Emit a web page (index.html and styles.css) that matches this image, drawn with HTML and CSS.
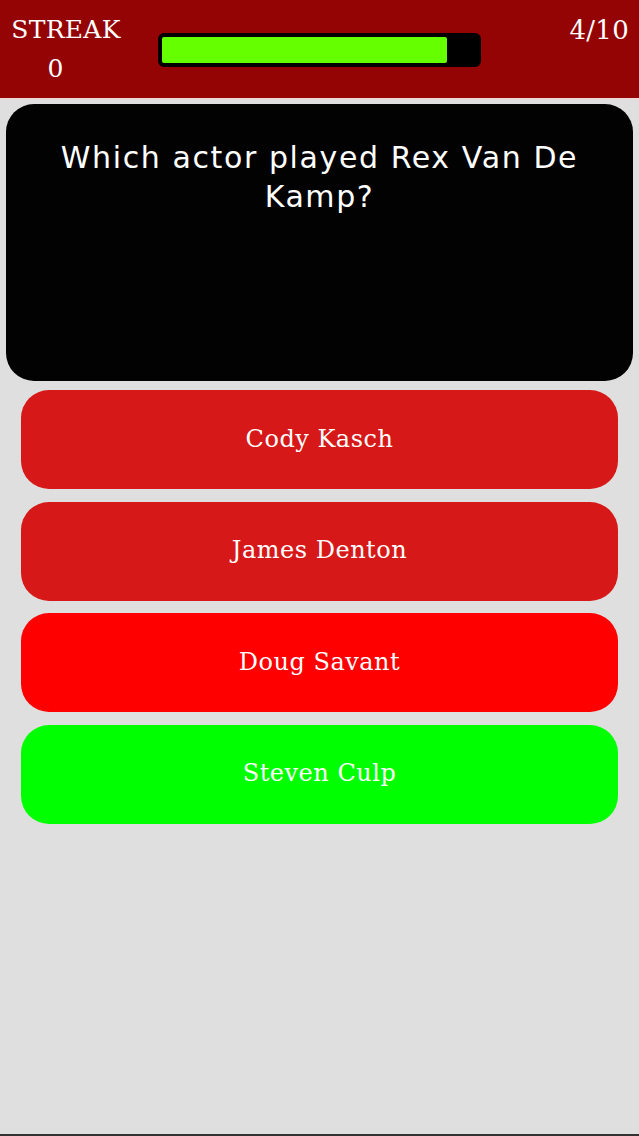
FILE: index.html
```html
<!DOCTYPE html>
<html lang="en">
<head>
  <meta charset="UTF-8">
  <title>Quiz</title>
  <link rel="stylesheet" href="styles.css">
</head>
<body>
  <div class="screen">
    <div class="topbar">
      <div class="streak">
        <div>STREAK</div>
        <div class="streak-num">0</div>
      </div>
      <div class="progress">
        <div class="progress-fill" style="width: 90.5%"></div>
      </div>
      <div class="count">4/10</div>
    </div>

    <div class="question">
      <p>Which actor played Rex Van De Kamp?</p>
    </div>

    <div class="answers">
      <div class="answer">Cody Kasch</div>
      <div class="answer">James Denton</div>
      <div class="answer wrong">Doug Savant</div>
      <div class="answer right">Steven Culp</div>
    </div>
  </div>
</body>
</html>
```

FILE: styles.css
```css
body {
  margin: 0;
  background: #e0dfe0;
  font-family: 'DejaVu Serif', serif;
}

.screen {
  height: 1134px;
  border-bottom: 2px solid #333;
  display: flex;
  flex-direction: column;
}

.topbar {
  height: 98px;
  border-bottom: 2px solid #e8d8d8;
  background: #940404;
  color: #fff;
  display: flex;
  align-items: flex-start;
  padding: 0 10px 0 10px;
}

.streak {
  width: 112px;
  text-align: center;
  font-size: 25px;
  line-height: 38px;
  padding-top: 11px;
  letter-spacing: 0.3px;
}

.streak-num {
  padding-right: 21px;
  margin-top: 1px;
}

.progress {
  margin: 33px 0 0 36px;
  width: 315px;
  height: 26px;
  background: #000;
  border: 4px solid #000;
  border-radius: 6px;
}

.progress-fill {
  height: 100%;
  background: #66ff00;
  border-radius: 2px;
}

.count {
  margin-left: auto;
  font-size: 26px;
  padding-top: 15px;
  letter-spacing: 0.3px;
}

.question {
  margin: 4px 6px 0 6px;
  height: 277px;
  background: #030203;
  border-radius: 28px;
  color: #fff;
  font-family: 'DejaVu Sans', sans-serif;
  font-size: 30px;
  text-align: center;
}

.question p {
  margin: 0;
  padding: 34px 20px 0 20px;
  line-height: 39px;
  letter-spacing: 1.6px;
}

.answers {
  display: flex;
  flex-direction: column;
  gap: 12.5px;
  padding: 9px 21px 0 21px;
}

.answer {
  height: 99px;
  border-radius: 28px;
  background: #d71818;
  color: #fff;
  font-size: 24px;
  display: flex;
  align-items: center;
  justify-content: center;
  letter-spacing: 0.5px;
  padding-bottom: 2px;
  box-sizing: border-box;
}

.answer.wrong {
  background: #ff0000;
}

.answer.right {
  background: #00ff00;
}
```
